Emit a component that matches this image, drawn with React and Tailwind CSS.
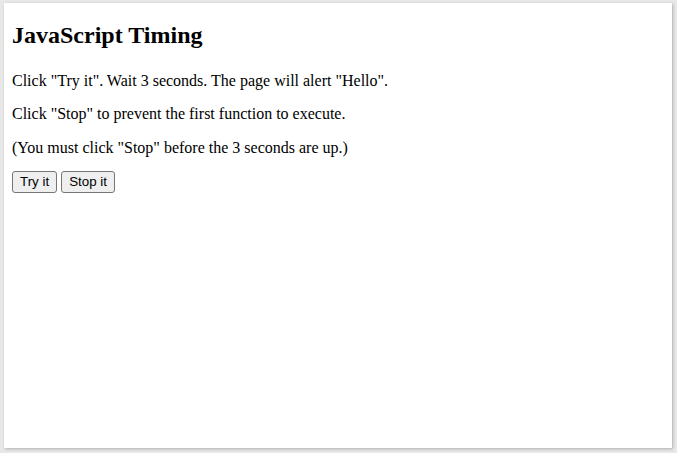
import React from 'react';

const serif = { fontFamily: '"Liberation Serif", "Times New Roman", serif' };

const DemoButton = ({ children }) => (
  <button className="border border-[#767676] rounded-[3px] bg-[#efefef] px-[7px] py-[2px] text-[13.33px] leading-[15.5px] text-black font-['Liberation_Sans',Arial,sans-serif] hover:bg-[#e5e5e5]">
    {children}
  </button>
);

const App = () => {
  return (
    <div className="w-[677px] h-[453px] bg-[#e8e8e8] pt-[3px] pl-[4px] overflow-hidden">
      <div className="w-[668px] h-[445px] bg-white shadow-[1px_1px_3px_rgba(0,0,0,0.25)] px-[8px] pt-[19px] text-black font-['Liberation_Serif','Times_New_Roman',serif]">
        <h2 className="text-[24px] leading-[27.6px] font-bold mb-[22px]" style={serif}>JavaScript Timing</h2>
        <p className="text-[16px] leading-[17.5px] mb-[16px]">Click "Try it". Wait 3 seconds. The page will alert "Hello".</p>
        <p className="text-[16px] leading-[17.5px] mb-[16px]">Click "Stop" to prevent the first function to execute.</p>
        <p className="text-[16px] leading-[17.5px] mb-[15px]">(You must click "Stop" before the 3 seconds are up.)</p>
        <div className="flex gap-[4px]">
          <DemoButton>Try it</DemoButton>
          <DemoButton>Stop it</DemoButton>
        </div>
      </div>
    </div>
  );
};

export default App;
